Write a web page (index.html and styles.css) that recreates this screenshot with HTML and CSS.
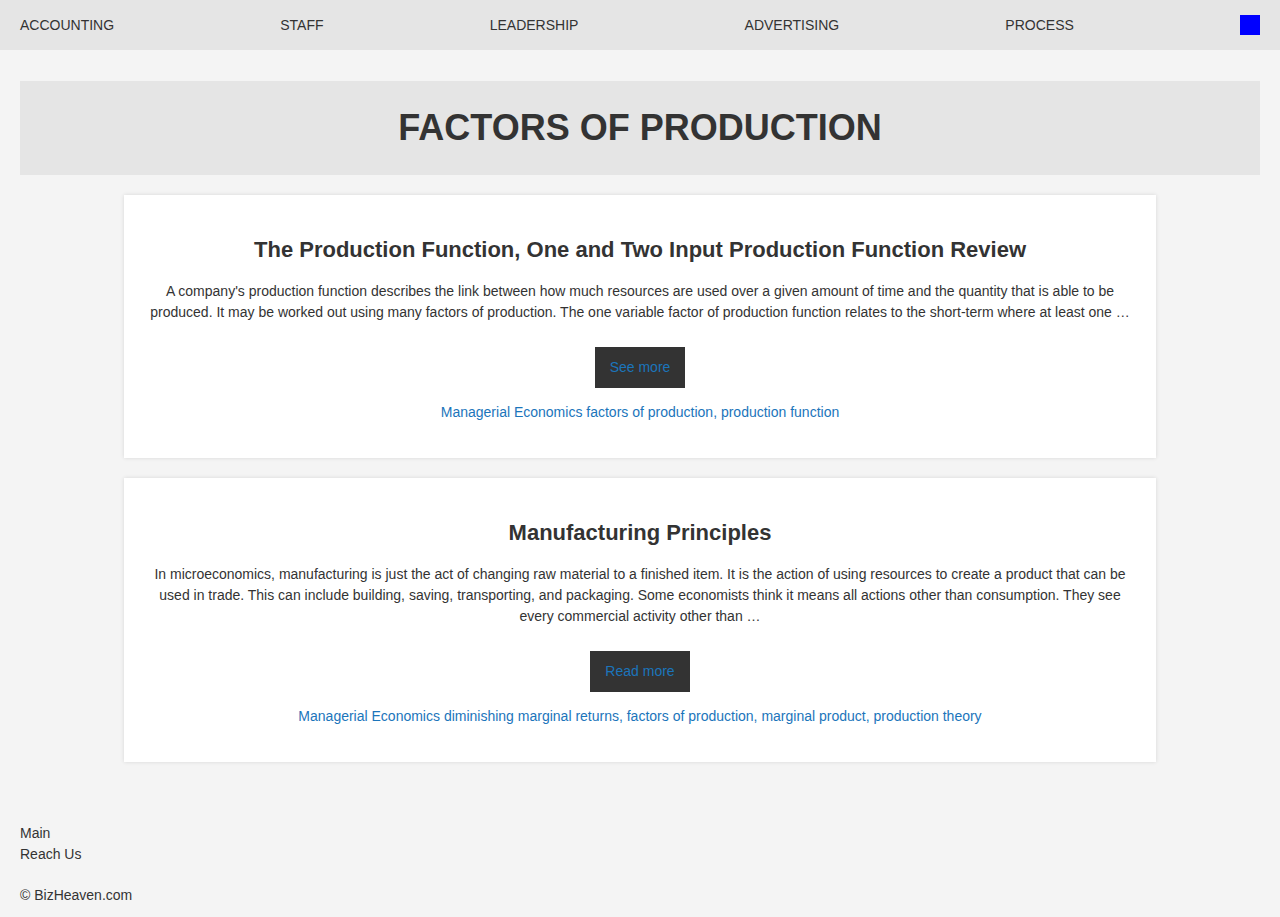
FILE: index.html
```html
<!DOCTYPE html>
<html lang="en">
<head>
<meta charset="utf-8">
<title>Factors of Production</title>
<link rel="stylesheet" href="styles.css">
</head>
<body>
<nav class="topnav">
  <a href="#" class="nav-link">ACCOUNTING</a>
  <a href="#" class="nav-link">STAFF</a>
  <a href="#" class="nav-link">LEADERSHIP</a>
  <a href="#" class="nav-link">ADVERTISING</a>
  <a href="#" class="nav-link">PROCESS</a>
  <span class="nav-square"></span>
</nav>
<main class="main">
  <header class="page-head">
    <h1 class="page-title">FACTORS OF PRODUCTION</h1>
  </header>
  <article class="card">
    <h2 class="card-title">The Production Function, One and Two Input Production Function Review</h2>
    <p class="card-text">A company's production function describes the link between how much resources are used over a given amount of time and the quantity that is able to be produced. It may be worked out using many factors of production. The one variable factor of production function relates to the short-term where at least one …</p>
    <a href="#" class="btn">See more</a>
    <p class="tags"><a href="#">Managerial Economics</a> <a href="#">factors of production</a>, <a href="#">production function</a></p>
  </article>
  <article class="card">
    <h2 class="card-title">Manufacturing Principles</h2>
    <p class="card-text">In microeconomics, manufacturing is just the act of changing raw material to a finished item. It is the action of using resources to create a product that can be used in trade. This can include building, saving, transporting, and packaging. Some economists think it means all actions other than consumption. They see every commercial activity other than …</p>
    <a href="#" class="btn">Read more</a>
    <p class="tags"><a href="#">Managerial Economics</a> <a href="#">diminishing marginal returns</a>, <a href="#">factors of production</a>, <a href="#">marginal product</a>, <a href="#">production theory</a></p>
  </article>
</main>
<footer class="footer">
  <a href="#" class="foot-link">Main</a>
  <a href="#" class="foot-link">Reach Us</a>
  <p class="copy">© BizHeaven.com</p>
</footer>
</body>
</html>
```

FILE: styles.css
```css
* { box-sizing: border-box; }
html, body {
  margin: 0;
  padding: 0;
  background: #f4f4f4;
  color: #333333;
  font-family: "Liberation Sans", Arial, sans-serif;
}
a { text-decoration: none; }

.topnav {
  display: flex;
  justify-content: space-between;
  align-items: center;
  height: 50px;
  padding: 0 20px;
  background: #e5e5e5;
}
.nav-link {
  color: #333333;
  font-size: 14px;
  line-height: 20px;
}
.nav-square {
  width: 20px;
  height: 20px;
  background: #0000ff;
}

.main {
  padding: 31px 20px 0;
  display: flex;
  flex-direction: column;
  align-items: center;
  gap: 20px;
}
.page-head {
  align-self: stretch;
  background: #e5e5e5;
  padding: 26px 10px 26px;
}
.page-title {
  margin: 0;
  text-align: center;
  font-size: 36px;
  line-height: 42px;
  font-weight: bold;
  color: #333333;
}

.card {
  width: 1032px;
  background: #ffffff;
  box-shadow: 0 0 4px rgba(0, 0, 0, 0.12);
  padding: 43px 26px 35px;
  display: flex;
  flex-direction: column;
  align-items: center;
  text-align: center;
}
.card-title {
  margin: 0 0 19px;
  font-size: 22px;
  line-height: 24px;
  font-weight: bold;
  color: #333333;
}
.card-text {
  margin: 0 0 24px;
  font-size: 14px;
  line-height: 21px;
}
.btn {
  display: block;
  background: #333333;
  color: #1b75bb;
  font-size: 14px;
  line-height: 21px;
  padding: 10px 15px;
}
.tags {
  margin: 14px 0 0;
  font-size: 14px;
  line-height: 21px;
  color: #1b75bb;
}
.tags a { color: #1b75bb; }

.footer {
  padding: 61px 20px 12px;
  display: flex;
  flex-direction: column;
  align-items: flex-start;
  font-size: 14px;
  line-height: 21px;
}
.foot-link { color: #333333; }
.copy {
  margin: 20px 0 0;
}
```
